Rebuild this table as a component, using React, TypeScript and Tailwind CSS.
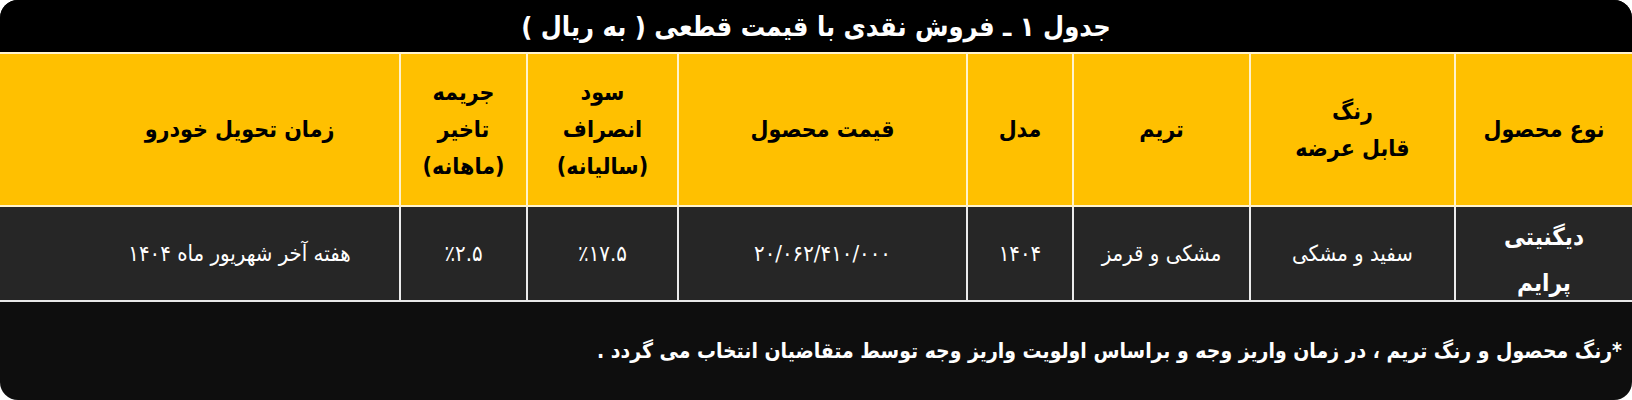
import React from "react";

const font = { fontFamily: '"DejaVu Sans Condensed", "DejaVu Sans", sans-serif' };

type Col = { w: string; head: string[]; cell: React.ReactNode };

const Pct = ({ n }: { n: string }) => (
  <span dir="ltr" className="inline-flex flex-row">
    <span>٪</span>
    <span>{n}</span>
  </span>
);

const cols: Col[] = [
  { w: "w-[401px] pl-[80px]", head: ["زمان تحویل خودرو"], cell: "هفته آخر شهریور ماه ۱۴۰۴" },
  { w: "w-[127px]", head: ["جریمه", "تاخیر", "(ماهانه)"], cell: <Pct n="۲.۵" /> },
  { w: "w-[151px]", head: ["سود", "انصراف", "(سالیانه)"], cell: <Pct n="۱۷.۵" /> },
  { w: "w-[289px]", head: ["قیمت محصول"], cell: <span dir="ltr">۲۰/۰۶۲/۴۱۰/۰۰۰</span> },
  { w: "w-[106px]", head: ["مدل"], cell: "۱۴۰۴" },
  { w: "w-[177px]", head: ["تریم"], cell: "مشکی و قرمز" },
  { w: "w-[205px]", head: ["رنگ", "قابل عرضه"], cell: "سفید و مشکی" },
  { w: "w-[176px]", head: ["نوع محصول"], cell: "" },
];

export default function App() {
  return (
    <div className="w-[1632px] h-[400px] bg-white" style={font}>
      <div className="w-[1632px] h-[400px] rounded-[18px] overflow-hidden flex flex-col bg-[#0e0e0e]">
        <div className="h-[54px] shrink-0 bg-black flex items-center justify-center border-b-2 border-[#fff3cc]">
          <div dir="rtl" className="text-white font-bold text-[27px] leading-none">
            جدول ۱ ـ فروش نقدی با قیمت قطعی ( به ریال )
          </div>
        </div>
        <div className="flex h-[153px] shrink-0 bg-[#ffc000] border-b-2 border-[#fff3cc]">
          {cols.map((c, i) => (
            <div
              key={i}
              className={`${c.w} shrink-0 flex flex-col items-center justify-center ${i < cols.length - 1 ? "border-r-2 border-[#fff3cc]" : ""}`}
            >
              {c.head.map((h, j) => (
                <div key={j} dir="rtl" className="text-black font-bold text-[23px] leading-[37px]">
                  {h}
                </div>
              ))}
            </div>
          ))}
        </div>
        <div className="flex h-[95px] shrink-0 bg-[#262626] border-b-2 border-[#e8e8e8]">
          {cols.map((c, i) => (
            <div
              key={i}
              className={`${c.w} shrink-0 flex items-center justify-center overflow-hidden ${i < cols.length - 1 ? "border-r-2 border-[#ececec]" : ""}`}
            >
              {i === cols.length - 1 ? (
                <div dir="rtl" className="text-white font-bold text-[24px] leading-[46px] text-center pt-[13px]">
                  <div>دیگنیتی</div>
                  <div>پرایم</div>
                </div>
              ) : (
                <div dir="rtl" className="text-white text-[22px] leading-none">
                  {c.cell}
                </div>
              )}
            </div>
          ))}
        </div>
        <div className="flex-1 flex items-center justify-end pr-[10px]">
          <div dir="rtl" className="text-white font-bold text-[21px] leading-none">
            *رنگ محصول و رنگ تریم ، در زمان واریز وجه و براساس اولویت واریز وجه توسط متقاضیان انتخاب می گردد .
          </div>
        </div>
      </div>
    </div>
  );
}
